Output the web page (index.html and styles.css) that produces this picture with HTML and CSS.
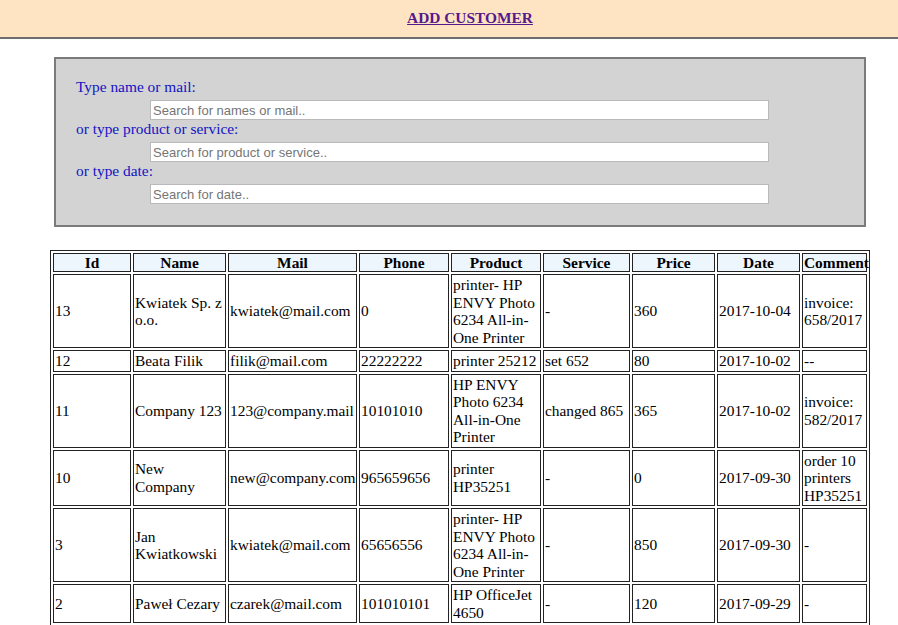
FILE: index.html
```html
<!DOCTYPE html>
<html>
<head>
<meta charset="utf-8">
<title>Customers</title>
<link rel="stylesheet" href="styles.css">
</head>
<body>
<header class="topbar">
  <a class="add-link" href="#">ADD CUSTOMER</a>
</header>

<section class="search-box">
  <div class="search-group">
    <label class="search-label">Type name or mail:</label>
    <input class="search-input" type="text" placeholder="Search for names or mail..">
  </div>
  <div class="search-group">
    <label class="search-label">or type product or service:</label>
    <input class="search-input" type="text" placeholder="Search for product or service..">
  </div>
  <div class="search-group">
    <label class="search-label">or type date:</label>
    <input class="search-input" type="text" placeholder="Search for date..">
  </div>
</section>

<table class="customers">
  <thead>
    <tr>
      <th class="c-id">Id</th>
      <th class="c-name">Name</th>
      <th class="c-mail">Mail</th>
      <th class="c-phone">Phone</th>
      <th class="c-product">Product</th>
      <th class="c-service">Service</th>
      <th class="c-price">Price</th>
      <th class="c-date">Date</th>
      <th class="c-comment">Comment</th>
    </tr>
  </thead>
  <tbody>
    <tr>
      <td>13</td><td>Kwiatek Sp. z o.o.</td><td>kwiatek@mail.com</td><td>0</td>
      <td>printer- HP ENVY Photo 6234 All-in-One Printer</td><td>-</td><td>360</td><td>2017-10-04</td><td>invoice: 658/2017</td>
    </tr>
    <tr>
      <td>12</td><td>Beata Filik</td><td>filik@mail.com</td><td>22222222</td>
      <td>printer 25212</td><td>set 652</td><td>80</td><td>2017-10-02</td><td>--</td>
    </tr>
    <tr>
      <td>11</td><td>Company 123</td><td>123@company.mail</td><td>10101010</td>
      <td>HP ENVY Photo 6234 All-in-One Printer</td><td>changed 865</td><td>365</td><td>2017-10-02</td><td>invoice: 582/2017</td>
    </tr>
    <tr>
      <td>10</td><td>New Company</td><td>new@company.com</td><td>965659656</td>
      <td>printer HP35251</td><td>-</td><td>0</td><td>2017-09-30</td><td>order 10 printers HP35251</td>
    </tr>
    <tr>
      <td>3</td><td>Jan Kwiatkowski</td><td>kwiatek@mail.com</td><td>65656556</td>
      <td>printer- HP ENVY Photo 6234 All-in-One Printer</td><td>-</td><td>850</td><td>2017-09-30</td><td>-</td>
    </tr>
    <tr>
      <td>2</td><td>Paweł Cezary</td><td>czarek@mail.com</td><td>101010101</td>
      <td>HP OfficeJet 4650</td><td>-</td><td>120</td><td>2017-09-29</td><td>-</td>
    </tr>
    <tr>
      <td>1</td><td>Adam Nowak</td><td>nowak@mail.com</td><td>123456789</td>
      <td>printer 1200</td><td>-</td><td>100</td><td>2017-09-28</td><td>-</td>
    </tr>
  </tbody>
</table>
</body>
</html>
```

FILE: styles.css
```css
html, body {
  margin: 0;
  padding: 0;
  background: #ffffff;
}

body {
  font-family: "Liberation Serif", "Times New Roman", serif;
  font-size: 15.4px;
  color: #000;
}

.topbar {
  height: 37px;
  background: #ffe4c4;
  border-bottom: 2px solid #6e6e6e;
  box-sizing: content-box;
  padding-left: 42px;
  text-align: center;
  line-height: 18px;
}

.add-link {
  display: inline-block;
  margin-top: 9px;
  font-weight: bold;
  color: #551a8b;
  text-decoration: underline;
}

.search-box {
  margin: 18px 0 0 54px;
  background: #d3d3d3;
  border: 2px solid #7b7b7b;
  padding: 20px 0 20px 20px;
  box-sizing: content-box;
  width: 788px;
}

.search-group {
  display: flex;
  flex-direction: column;
}

.search-label {
  color: #1212c4;
  line-height: 16px;
  height: 16px;
}

.search-input {
  margin: 5px 0 1px 74px;
  width: 619px;
  height: 20px;
  box-sizing: border-box;
  border: 1px solid #b9b9b9;
  background: #fff;
  padding: 0 2px;
  font-family: "Liberation Sans", Arial, sans-serif;
  font-size: 13px;
  outline: none;
}

.search-input::placeholder {
  color: #757575;
}

.customers {
  margin: 23px 0 0 50px;
  width: 820px;
  table-layout: fixed;
  border: 1px solid #222;
  border-spacing: 2px;
  border-collapse: separate;
  font-size: 15.4px;
  line-height: 17.5px;
}

.customers th,
.customers td {
  border: 1px solid #222;
  padding: 1px;
  box-sizing: border-box;
  white-space: normal;
}

.customers th {
  background: #edf5fd;
  font-weight: bold;
  text-align: center;
  line-height: 15px;
}

.customers td {
  text-align: left;
  vertical-align: middle;
}

.c-id { width: 78px; }
.c-name { width: 93px; }
.c-mail { width: 129px; }
.c-phone { width: 90px; }
.c-product { width: 90px; }
.c-service { width: 87px; }
.c-price { width: 83px; }
.c-date { width: 83px; }
.c-comment { width: 65px; }
```
